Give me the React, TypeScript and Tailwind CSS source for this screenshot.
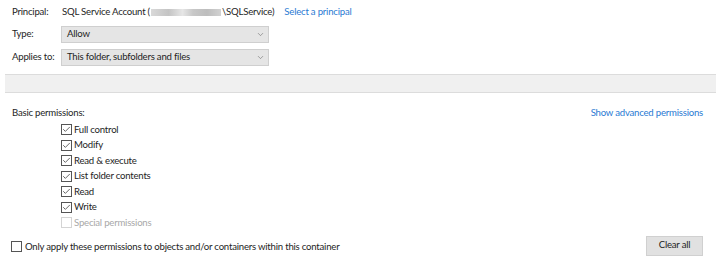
import { Check, ChevronDown } from 'lucide-react';

const perms = [
    { label: 'Full control', checked: true },
    { label: 'Modify', checked: true },
    { label: 'Read & execute', checked: true },
    { label: 'List folder contents', checked: true },
    { label: 'Read', checked: true },
    { label: 'Write', checked: true },
    { label: 'Special permissions', checked: false, disabled: true },
];

function Box({ checked, disabled }: { checked?: boolean; disabled?: boolean }) {
    return (
        <span
            className={`flex h-[11px] w-[11px] shrink-0 items-center justify-center border bg-white ${
                disabled ? 'border-[#d4d4d4]' : 'border-[#555]'
            }`}
        >
            {checked && <Check className="h-[9px] w-[9px] text-[#333]" strokeWidth={2} />}
        </span>
    );
}

function Select({ value }: { value: string }) {
    return (
        <div className="flex h-[17px] w-[208px] items-center justify-between border border-[#cfcfcf] bg-[#e5e5e5] pl-[5px] pr-[3px]">
            <span>{value}</span>
            <ChevronDown className="h-[9px] w-[9px] text-[#666]" strokeWidth={1.5} />
        </div>
    );
}

export default function App() {
    return (
        <div className="h-[263px] w-[721px] bg-white text-[9.6px] tracking-[-0.22px] text-[#1e1e1e] [font-family:Lato,sans-serif]">
            <div className="flex h-[24px] items-center pl-[12px] pt-[1px]">
                <span className="w-[50px]">Principal:</span>
                <span>SQL Service Account (</span>
                <span className="mx-[1px] flex h-[7px] w-[70px] bg-[linear-gradient(90deg,#d9d9d9_0%,#c4c4c4_25%,#e6e6e6_45%,#c8c8c8_60%,#bdbdbd_80%,#d2d2d2_100%)]" />
                <span>\SQLService)</span>
                <span className="ml-[10px] text-[#2a7ad3]">Select a principal</span>
            </div>
            <div className="flex h-[21px] items-center pl-[12px]">
                <span className="w-[49px]">Type:</span>
                <Select value="Allow" />
            </div>
            <div className="mt-[4px] flex h-[17px] items-center pl-[12px]">
                <span className="w-[49px]">Applies to:</span>
                <Select value="This folder, subfolders and files" />
            </div>
            <div className="mx-[5px] mt-[8px] h-[19px] border-y border-[#dcdcdc] bg-[#f0f0f0]" />
            <div className="mt-[11px] flex h-[18px] items-center justify-between pl-[12px] pr-[18px]">
                <span>Basic permissions:</span>
                <span className="text-[#2a7ad3]">Show advanced permissions</span>
            </div>
            <div className="flex flex-col pl-[61px]">
                {perms.map((p) => (
                    <label key={p.label} className="flex h-[15.5px] items-center gap-[2px]">
                        <Box checked={p.checked} disabled={p.disabled} />
                        <span className={p.disabled ? 'text-[#a8a8a8]' : ''}>{p.label}</span>
                    </label>
                ))}
            </div>
            <div className="mt-[5px] flex h-[20px] items-center justify-between pl-[11px] pr-[18px]">
                <label className="flex items-center gap-[3px] pt-[3px]">
                    <Box />
                    <span>Only apply these permissions to objects and/or containers within this container</span>
                </label>
                <button className="h-[20px] w-[57px] border border-[#d0d0d0] bg-[#e1e1e1]">Clear all</button>
            </div>
        </div>
    );
}
